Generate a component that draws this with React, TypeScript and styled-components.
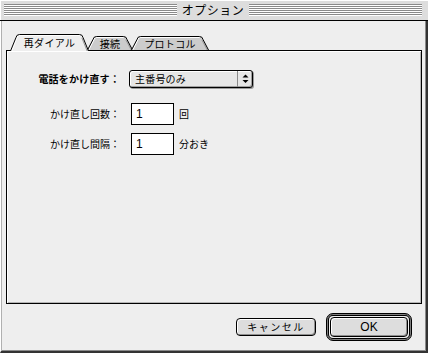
import React from "react";
import styled, { createGlobalStyle } from "styled-components";

const Global = createGlobalStyle`
  html, body { margin: 0; padding: 0; background: #eeeeee; }
  body { font-family: "Noto Sans CJK JP", "Noto Sans", sans-serif; color: #000; }
  * { box-sizing: border-box; }
`;

const Window = styled.div`
  width: 428px;
  height: 353px;
  display: flex;
  flex-direction: column;
  background: #eeeeee;
`;

const TitleBar = styled.div`
  height: 21px;
  flex: none;
  display: flex;
  align-items: center;
  gap: 5px;
  padding: 0 6px 1px 4px;
  background: #dddddd;
  border-bottom: 1px solid #000;
  box-shadow: inset 1px 1px 0 #fff;
`;

const Stripes = styled.div`
  flex: 1;
  height: 12px;
  background: repeating-linear-gradient(
    to bottom,
    #8a8a8a 0,
    #8a8a8a 1px,
    #ffffff 1px,
    #ffffff 2px
  );
`;

const Title = styled.div`
  font-size: 12px;
  line-height: 14px;
  letter-spacing: 0.5px;
  white-space: nowrap;
`;

const Body = styled.div`
  flex: 1;
  display: flex;
  flex-direction: column;
  padding: 13px 4px 0 5px;
  border-left: 1px solid #ffffff;
  border-right: 2px solid #333;
  border-bottom: 2px solid #333;
  box-shadow: inset 1px 0 0 #b0b0b0, inset -1px -1px 0 #8a8a8a;
`;

const TabRow = styled.div`
  height: 17px;
  display: flex;
  align-items: flex-end;
  padding-left: 4px;
  margin-bottom: -1px;
  position: relative;
  z-index: 1;
`;

const TabItem = styled.div<{ $w: number; $h: number; $sel?: boolean; $shift?: number }>`
  position: relative;
  width: ${(p) => p.$w}px;
  height: ${(p) => p.$h}px;
  margin-left: ${(p) => p.$shift ?? 0}px;
  margin-bottom: ${(p) => (p.$sel ? 0 : 1)}px;
  z-index: ${(p) => (p.$sel ? 2 : 1)};
  display: flex;
  justify-content: center;
  align-items: center;
  padding-top: 1px;
  font-size: 10px;
  line-height: 12px;
  letter-spacing: 0.3px;
`;

const TabBg = styled.svg`
  position: absolute;
  left: 0;
  top: 0;
`;

const TabLabel = styled.span`
  position: relative;
`;

const Tab = ({
  w,
  label,
  selected,
  shift,
}: {
  w: number;
  label: string;
  selected?: boolean;
  shift?: number;
}) => {
  const h = selected ? 17 : 14;
  const s = 7;
  const d = `M0.5 ${h} L${s - 1} 3.5 Q${s - 0.5} 0.5 ${s + 2.5} 0.5 L${w - s - 2.5} 0.5 Q${w - s + 0.5} 0.5 ${w - s + 1} 3.5 L${w - 0.5} ${h}`;
  const hl = `M1.8 ${h} L${s} 3.8 Q${s + 0.3} 1.5 ${s + 2.5} 1.5 L${w - s - 2.5} 1.5`;
  const sh = `M${w - s - 0.2} 3.8 L${w - 1.8} ${h}`;
  return (
    <TabItem $w={w} $h={h} $sel={selected} $shift={shift}>
      <TabBg width={w} height={h} viewBox={`0 0 ${w} ${h}`}>
        <path d={d} fill={selected ? "#eeeeee" : "#cccccc"} stroke="none" />
        <path d={hl} fill="none" stroke="#ffffff" strokeWidth={1} />
        <path d={sh} fill="none" stroke="#999" strokeWidth={1} />
        <path d={d} fill="none" stroke="#000" strokeWidth={1} />
      </TabBg>
      <TabLabel>{label}</TabLabel>
    </TabItem>
  );
};

const Panel = styled.div`
  height: 254px;
  flex: none;
  border: 1px solid #000;
  background: #eeeeee;
  box-shadow: inset 1px 1px 0 #ffffff, inset -1px -1px 0 #b5b5b5;
  padding: 19px 0 0 0;
  display: flex;
  flex-direction: column;
`;

const Row = styled.div<{ $mt?: number }>`
  display: flex;
  align-items: center;
  margin-top: ${(p) => p.$mt ?? 0}px;
`;

const Label = styled.div<{ $bold?: boolean; $w: number; $gap: number }>`
  width: ${(p) => p.$w}px;
  margin-right: ${(p) => p.$gap}px;
  text-align: right;
  font-size: 10px;
  line-height: 12px;
  font-weight: ${(p) => (p.$bold ? 700 : 400)};
  white-space: nowrap;
  letter-spacing: ${(p) => (p.$bold ? 0.2 : 0)}px;
`;

const Popup = styled.div`
  width: 124px;
  height: 18px;
  border: 1px solid #000;
  border-radius: 3px;
  background: #e6e6e6;
  box-shadow: inset 1px 1px 0 #fff, inset -1px -1px 0 #a0a0a0, 1px 1px 0 #9a9a9a;
  display: flex;
  align-items: stretch;
`;

const PopupText = styled.div`
  flex: 1;
  font-size: 10px;
  line-height: 16px;
  padding-left: 5px;
  letter-spacing: 0.2px;
`;

const PopupArrows = styled.div`
  width: 15px;
  border-left: 1px solid #8a8a8a;
  display: flex;
  align-items: center;
  justify-content: center;
`;

const Field = styled.div`
  width: 43px;
  height: 22px;
  border: 1px solid #000;
  background: #fff;
  font-family: "Liberation Sans", "Noto Sans", sans-serif;
  font-size: 12px;
  line-height: 20px;
  padding-left: 4px;
`;

const Unit = styled.div`
  margin-left: 5px;
  font-size: 10px;
  line-height: 12px;
`;

const ButtonRow = styled.div`
  display: flex;
  justify-content: flex-end;
  align-items: center;
  gap: 10px;
  padding-right: 10px;
  margin-top: 9px;
`;

const Button = styled.div`
  width: 80px;
  height: 18px;
  border: 1px solid #000;
  border-radius: 4px;
  background: #dddddd;
  box-shadow: inset 1px 1px 0 #fff, inset -1px -1px 0 #8f8f8f;
  display: flex;
  align-items: center;
  justify-content: center;
  font-size: 10px;
  letter-spacing: 1.5px;
  line-height: 12px;
`;

const DefaultRing = styled.div`
  border: 1px solid #000;
  border-radius: 7px;
  box-shadow: inset 0 0 0 1px #808080, inset 0 0 0 2px #000;
  padding: 3px;
  background: #eeeeee;
  display: flex;
`;

const OkButton = styled(Button)`
  width: 78px;
  height: 20px;
  font-family: "Liberation Sans", "Noto Sans", sans-serif;
  font-size: 12px;
  letter-spacing: 0;
`;

export default function App() {
  return (
    <>
      <Global />
      <Window>
        <TitleBar>
          <Stripes />
          <Title>オプション</Title>
          <Stripes />
        </TitleBar>
        <Body>
          <TabRow>
            <Tab w={79} label="再ダイアル" selected />
            <Tab w={46} label="接続" shift={-2} />
            <Tab w={78} label="プロトコル" shift={-2} />
          </TabRow>
          <Panel>
            <Row>
              <Label $bold $w={113} $gap={9}>
                電話をかけ直す：
              </Label>
              <Popup>
                <PopupText>主番号のみ</PopupText>
                <PopupArrows>
                  <svg width="7" height="10" viewBox="0 0 7 10">
                    <path d="M3.5 0.5 L6.5 3.5 L0.5 3.5 Z" fill="#000" />
                    <path d="M0.5 6 L6.5 6 L3.5 9 Z" fill="#000" />
                  </svg>
                </PopupArrows>
              </Popup>
            </Row>
            <Row $mt={15}>
              <Label $w={113} $gap={11}>
                かけ直し回数：
              </Label>
              <Field>1</Field>
              <Unit>回</Unit>
            </Row>
            <Row $mt={8}>
              <Label $w={113} $gap={11}>
                かけ直し間隔：
              </Label>
              <Field>1</Field>
              <Unit>分おき</Unit>
            </Row>
          </Panel>
          <ButtonRow>
            <Button>キャンセル</Button>
            <DefaultRing>
              <OkButton>OK</OkButton>
            </DefaultRing>
          </ButtonRow>
        </Body>
      </Window>
    </>
  );
}
